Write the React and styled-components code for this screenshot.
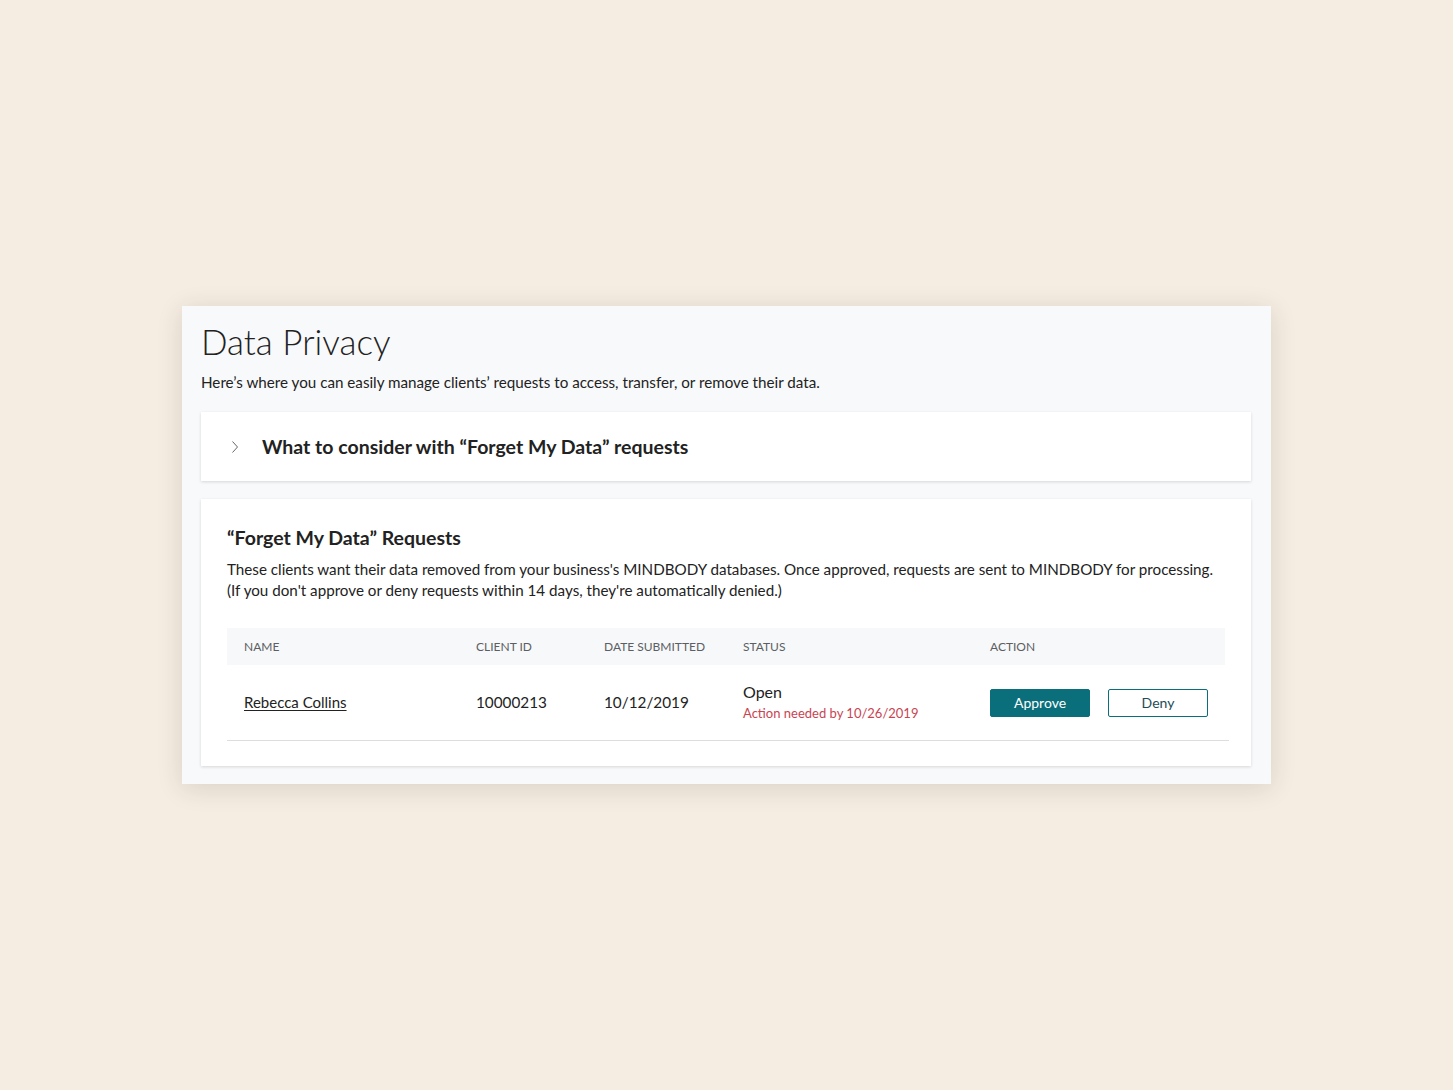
import React from "react";
import styled, { createGlobalStyle } from "styled-components";

const GlobalStyle = createGlobalStyle`
  body {
    margin: 0;
    background-color: #f5ede2;
    font-family: Lato, "Open Sans", sans-serif;
    color: #222;
  }
`;

const Page = styled.div`
  min-height: 100vh;
  display: flex;
  align-items: center;
  justify-content: center;
`;

const Panel = styled.section`
  width: 1089px;
  box-sizing: border-box;
  padding: 14px 20px 18px 19px;
  background-color: #f8f9fb;
  box-shadow: 0 4px 24px rgba(60, 45, 20, 0.14);
  display: flex;
  flex-direction: column;
`;

const Title = styled.h1`
  margin: 0;
  font-size: 35px;
  font-weight: 300;
  line-height: 43px;
  color: #222;
`;

const Subtitle = styled.p`
  margin: 10px 0 21px;
  font-size: 15.2px;
  line-height: 18px;
  color: #222;
`;

const Card = styled.div`
  background-color: #fff;
  box-shadow: 0 1px 3px rgba(0, 0, 0, 0.14);
  margin-bottom: ${(p) => p.$gap || 0}px;
`;

const AccordionHead = styled.button`
  width: 100%;
  height: 69px;
  display: flex;
  align-items: center;
  gap: 23px;
  padding: 0 0 0 30px;
  border: none;
  background: none;
  font-family: inherit;
  cursor: pointer;
  text-align: left;
`;

const AccordionTitle = styled.span`
  font-size: 19.5px;
  font-weight: 700;
  color: #222;
`;

const RequestsBody = styled.div`
  padding: 27px 26px 25px;
`;

const SectionTitle = styled.h2`
  margin: 0;
  font-size: 19.5px;
  font-weight: 700;
  line-height: 24px;
  color: #222;
`;

const Description = styled.p`
  margin: 9px 0 27px;
  font-size: 15.2px;
  line-height: 21px;
  color: #222;
`;

const Grid = styled.div`
  display: grid;
  grid-template-columns: 232px 128px 139px 247px 1fr;
  align-items: center;
  padding-left: 17px;
`;

const HeaderRow = styled(Grid)`
  height: 37px;
  background-color: #f7f8fa;
`;

const HeaderCell = styled.div`
  font-size: 12px;
  text-transform: uppercase;
  color: #5b5e63;
`;

const BodyRow = styled(Grid)`
  height: 75px;
  margin-right: -4px;
  border-bottom: 1px solid #dcdde0;
`;

const Cell = styled.div`
  font-size: 15.3px;
  color: #222;
  margin-top: -1px;
`;

const NameLink = styled.a`
  font-size: 15px;
  color: #222;
  text-decoration: underline;
  text-underline-offset: 2px;
  cursor: pointer;
`;

const StatusCell = styled.div`
  display: flex;
  flex-direction: column;
  gap: 4px;
  margin-top: -2px;
`;

const StatusText = styled.span`
  font-size: 16px;
  color: #222;
`;

const Deadline = styled.span`
  font-size: 13px;
  color: #c94452;
`;

const Actions = styled.div`
  display: flex;
  gap: 18px;
`;

const Button = styled.button`
  width: 100px;
  height: 28px;
  box-sizing: border-box;
  border-radius: 2px;
  font-family: inherit;
  font-size: 14px;
  cursor: pointer;
  border: 1px solid #0b6f7b;
  background-color: ${(p) => (p.$primary ? "#0b6f7b" : "#fff")};
  color: ${(p) => (p.$primary ? "#fff" : "#1d4d57")};
`;

const Chevron = () => (
  <svg width="8" height="14" viewBox="0 0 8 14" fill="none">
    <path d="M1.5 1.5 L6.5 7 L1.5 12.5" stroke="#666" strokeWidth="1" />
  </svg>
);

const columns = ["Name", "Client ID", "Date Submitted", "Status", "Action"];

const App = () => {
  return (
    <Page>
      <GlobalStyle />
      <Panel>
        <Title>Data Privacy</Title>
        <Subtitle>
          Here’s where you can easily manage clients’ requests to access,
          transfer, or remove their data.
        </Subtitle>
        <Card $gap={18}>
          <AccordionHead>
            <Chevron />
            <AccordionTitle>
              What to consider with “Forget My Data” requests
            </AccordionTitle>
          </AccordionHead>
        </Card>
        <Card>
          <RequestsBody>
            <SectionTitle>“Forget My Data” Requests</SectionTitle>
            <Description>
              These clients want their data removed from your business's
              MINDBODY databases. Once approved, requests are sent to MINDBODY
              for processing.
              <br />
              (If you don't approve or deny requests within 14 days, they're
              automatically denied.)
            </Description>
            <HeaderRow>
              {columns.map((c) => (
                <HeaderCell key={c}>{c}</HeaderCell>
              ))}
            </HeaderRow>
            <BodyRow>
              <Cell>
                <NameLink>Rebecca Collins</NameLink>
              </Cell>
              <Cell>10000213</Cell>
              <Cell>10/12/2019</Cell>
              <StatusCell>
                <StatusText>Open</StatusText>
                <Deadline>Action needed by 10/26/2019</Deadline>
              </StatusCell>
              <Actions>
                <Button $primary>Approve</Button>
                <Button>Deny</Button>
              </Actions>
            </BodyRow>
          </RequestsBody>
        </Card>
      </Panel>
    </Page>
  );
};

export default App;
